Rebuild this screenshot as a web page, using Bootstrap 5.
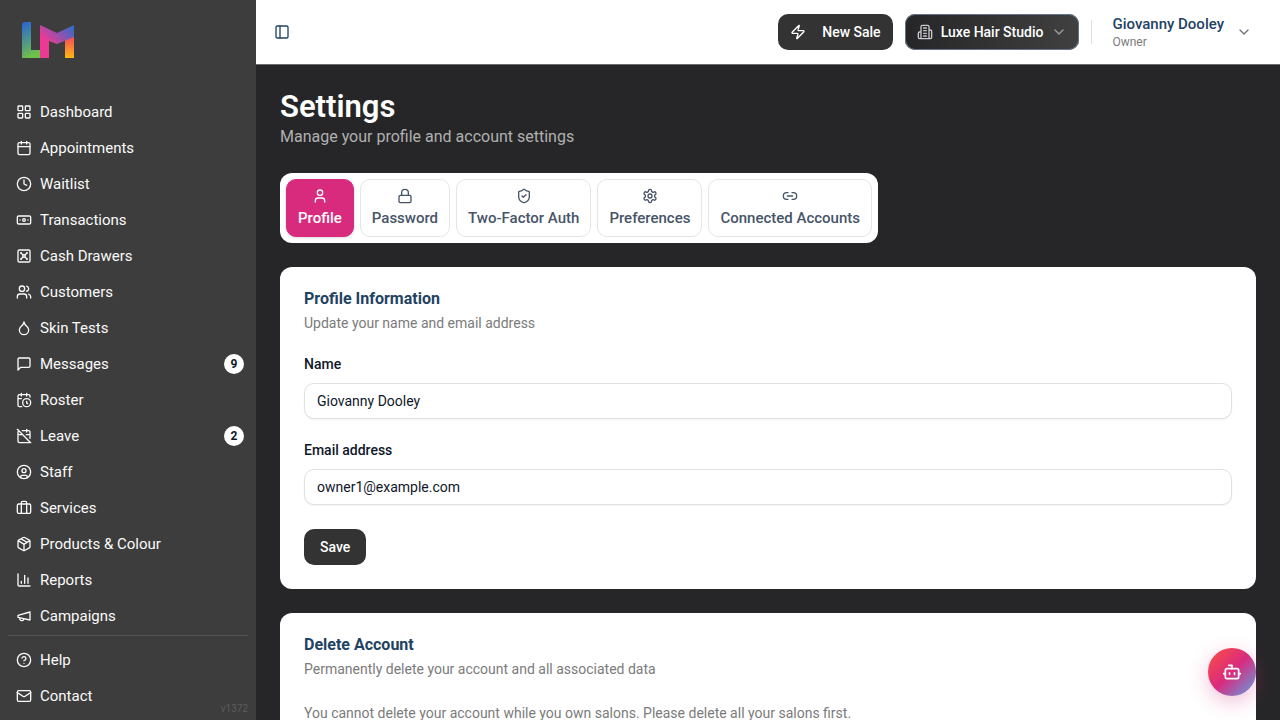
<!DOCTYPE html>
<html lang="en">
<head>
<meta charset="utf-8">
<meta name="viewport" content="width=device-width, initial-scale=1">
<title>Settings</title>
<link href="https://cdn.jsdelivr.net/npm/bootstrap@5.3.0/dist/css/bootstrap.min.css" rel="stylesheet">
<style>
  :root { --navy: #1f4363; --ink: #0f172a; --slate: #475569; --muted: #7b7b7b; --pink: #d92b7e; --coal: #333333; }
  body { font-family: Roboto, "Liberation Sans", sans-serif; font-size: 14px; line-height: 20px; color: var(--ink); background: #262628; }
  .ico { width: 16px; height: 16px; flex: none; fill: none; stroke: currentColor; stroke-width: 2; stroke-linecap: round; stroke-linejoin: round; }
  .ico-lg { width: 20px; height: 20px; }

  .sidebar { width: 256px; background: #3d3d3d; color: #fafafa; }
  .brand-link { padding: 20px 20px 34px; }
  .brand-link svg { display: block; width: 56px; height: 40px; }
  .side-link { display: flex; align-items: center; gap: 8px; height: 36px; padding: 0 8px; border-radius: 8px; color: #fafafa; text-decoration: none; font-size: 15px; }
  .side-link:hover { background: #4b4b4b; }
  .count-pill { width: 20px; height: 20px; margin-right: -4px; border-radius: 50%; background: #fff; color: var(--ink); font-size: 12px; font-weight: 700; }
  .side-foot { margin: 0 8px; padding: 6px 0; border-top: 1px solid #525252; }
  .version { right: 8px; bottom: 4px; font-size: 10px; line-height: 14px; color: #5c5c5c; }

  .topbar { height: 65px; padding: 0 24px 0 12px; background: #fff; border-bottom: 1px solid #6b6b6b; }
  .toggle-btn { padding: 6px; border: 0; color: var(--navy); line-height: 1; }
  .bar-actions { gap: 12px; }
  .dark-btn { height: 36px; padding: 0 12px; border: 0; border-radius: 10px; background: var(--coal); color: #fff; font-size: 14px; font-weight: 500; line-height: 20px; }
  .dark-btn:hover { background: #444; color: #fff; }
  .studio-btn { background: linear-gradient(90deg, #262628, #404040); box-shadow: inset 0 0 0 1px #64748b; }
  .divider { width: 1px; height: 24px; background: #e0e0e0; }
  .user-btn { gap: 12px; }
  .user-name { color: var(--navy); font-size: 15px; font-weight: 500; line-height: 20px; }
  .user-role { color: var(--muted); font-size: 12px; line-height: 16px; }

  .page-body { padding: 24px; }
  .page-title { font-size: 31px; line-height: 36px; font-weight: 600; color: #fff; }
  .page-sub { font-size: 16px; line-height: 24px; color: #b0b0b0; }
  .tab-strip { width: 598px; max-width: 100%; padding: 6px; gap: 6px; border-radius: 12px; background: #fff; overflow-x: auto; }
  .tab-btn { height: 58px; padding: 0 10px; border: 1px solid #e5e5e5; border-radius: 10px; background: #fff; color: var(--slate); font-size: 15px; font-weight: 500; line-height: 20px; gap: 4px; white-space: nowrap; }
  .tab-btn.active { border-color: var(--pink); background: var(--pink); color: #fff; box-shadow: 0 1px 3px rgba(0,0,0,.15); }

  .panel { padding: 24px; border-radius: 12px; background: #fff; }
  .panel-title { font-size: 16px; line-height: 16px; font-weight: 700; color: var(--navy); margin-bottom: 6px; }
  .panel-text { color: var(--muted); }
  .field-label { display: block; font-size: 14px; line-height: 14px; font-weight: 500; margin-bottom: 12px; }
  .field-input { height: 36px; padding: 0 12px; border: 1px solid #dfe1e3; border-radius: 10px; font-size: 14px; line-height: 20px; color: var(--ink); box-shadow: 0 1px 2px rgba(0,0,0,.05); }
  .chat-btn { right: 24px; bottom: 24px; width: 48px; height: 48px; border: 0; border-radius: 50%; color: #fff; background: linear-gradient(135deg, #ff5040 0%, #d92b7e 50%, #5ba4e6 100%); box-shadow: 0 6px 20px rgba(217,43,126,.3); }
</style>
</head>
<body>
<svg class="d-none" aria-hidden="true">
  <symbol id="i-grid" viewBox="0 0 24 24"><rect x="3" y="3" width="7" height="7" rx="1"/><rect x="14" y="3" width="7" height="7" rx="1"/><rect x="14" y="14" width="7" height="7" rx="1"/><rect x="3" y="14" width="7" height="7" rx="1"/></symbol>
  <symbol id="i-cal" viewBox="0 0 24 24"><path d="M8 2v4M16 2v4M3 10h18"/><rect x="3" y="4" width="18" height="18" rx="2"/></symbol>
  <symbol id="i-clock" viewBox="0 0 24 24"><circle cx="12" cy="12" r="10"/><path d="M12 6v6l4 2"/></symbol>
  <symbol id="i-note" viewBox="0 0 24 24"><rect x="2" y="6" width="20" height="12" rx="2"/><circle cx="12" cy="12" r="2"/><path d="M6 12h.01M18 12h.01"/></symbol>
  <symbol id="i-vault" viewBox="0 0 24 24"><rect x="3" y="3" width="18" height="18" rx="2"/><circle cx="7.5" cy="7.5" r=".5" fill="currentColor"/><path d="m7.900 7.900 2.700 2.700"/><circle cx="16.500" cy="7.500" r=".5" fill="currentColor"/><path d="m13.400 10.600 2.700-2.700"/><circle cx="7.500" cy="16.500" r=".5" fill="currentColor"/><path d="m7.900 16.100 2.700-2.700"/><circle cx="16.500" cy="16.500" r=".5" fill="currentColor"/><path d="m13.400 13.400 2.700 2.700"/><circle cx="12" cy="12" r="2"/></symbol>
  <symbol id="i-users" viewBox="0 0 24 24"><path d="M16 21v-2a4 4 0 0 0-4-4H6a4 4 0 0 0-4 4v2"/><circle cx="9" cy="7" r="4"/><path d="M22 21v-2a4 4 0 0 0-3-3.870M16 3.130a4 4 0 0 1 0 7.750"/></symbol>
  <symbol id="i-drop" viewBox="0 0 24 24"><path d="M12 22a7 7 0 0 0 7-7c0-2-1-3.900-3-5.500s-3.500-4-4-6.500c-.5 2.500-2 4.900-4 6.500C6 11.100 5 13 5 15a7 7 0 0 0 7 7z"/></symbol>
  <symbol id="i-msg" viewBox="0 0 24 24"><path d="M21 15a2 2 0 0 1-2 2H7l-4 4V5a2 2 0 0 1 2-2h14a2 2 0 0 1 2 2z"/></symbol>
  <symbol id="i-calclock" viewBox="0 0 24 24"><path d="M21 7.500V6a2 2 0 0 0-2-2H5a2 2 0 0 0-2 2v14a2 2 0 0 0 2 2h3.500M16 2v4M8 2v4M3 10h5M17.500 17.500 16 16.300V14"/><circle cx="16" cy="16" r="6"/></symbol>
  <symbol id="i-caloff" viewBox="0 0 24 24"><path d="M4.200 4.200A2 2 0 0 0 3 6v14a2 2 0 0 0 2 2h14a2 2 0 0 0 1.820-1.180M21 15.500V6a2 2 0 0 0-2-2H9.500M16 2v4M3 10h7M21 10h-5.500M2 2l20 20"/></symbol>
  <symbol id="i-usercircle" viewBox="0 0 24 24"><circle cx="12" cy="12" r="10"/><circle cx="12" cy="10" r="3"/><path d="M7 20.662V19a2 2 0 0 1 2-2h6a2 2 0 0 1 2 2v1.662"/></symbol>
  <symbol id="i-case" viewBox="0 0 24 24"><path d="M16 20V4a2 2 0 0 0-2-2h-4a2 2 0 0 0-2 2v16"/><rect x="2" y="6" width="20" height="14" rx="2"/></symbol>
  <symbol id="i-box" viewBox="0 0 24 24"><path d="M11 21.730a2 2 0 0 0 2 0l7-4A2 2 0 0 0 21 16V8a2 2 0 0 0-1-1.730l-7-4a2 2 0 0 0-2 0l-7 4A2 2 0 0 0 3 8v8a2 2 0 0 0 1 1.730zM12 22V12M3.300 7l7.703 4.734a2 2 0 0 0 1.994 0L20.700 7M7.500 4.270l9 5.150"/></symbol>
  <symbol id="i-chart" viewBox="0 0 24 24"><path d="M3 3v16a2 2 0 0 0 2 2h16M18 17V9M13 17V5M8 17v-3"/></symbol>
  <symbol id="i-horn" viewBox="0 0 24 24"><path d="m3 11 18-5v12L3 14v-3zM11.600 16.800a3 3 0 1 1-5.800-1.600"/></symbol>
  <symbol id="i-help" viewBox="0 0 24 24"><circle cx="12" cy="12" r="10"/><path d="M9.090 9a3 3 0 0 1 5.830 1c0 2-3 3-3 3M12 17h.01"/></symbol>
  <symbol id="i-mail" viewBox="0 0 24 24"><rect x="2" y="4" width="20" height="16" rx="2"/><path d="m22 7-8.970 5.700a1.940 1.940 0 0 1-2.060 0L2 7"/></symbol>
  <symbol id="i-panel" viewBox="0 0 24 24"><rect x="3" y="3" width="18" height="18" rx="2"/><path d="M9 3v18"/></symbol>
  <symbol id="i-zap" viewBox="0 0 24 24"><path d="M4 14a1 1 0 0 1-.78-1.630l9.900-10.200a.5.5 0 0 1 .86.460l-1.920 6.020A1 1 0 0 0 13 10h7a1 1 0 0 1 .78 1.630l-9.900 10.200a.5.5 0 0 1-.86-.460l1.920-6.020A1 1 0 0 0 11 14z"/></symbol>
  <symbol id="i-building" viewBox="0 0 24 24"><path d="M6 22V4a2 2 0 0 1 2-2h8a2 2 0 0 1 2 2v18ZM6 12H4a2 2 0 0 0-2 2v6a2 2 0 0 0 2 2h2M18 9h2a2 2 0 0 1 2 2v9a2 2 0 0 1-2 2h-2M10 6h4M10 10h4M10 14h4M10 18h4"/></symbol>
  <symbol id="i-down" viewBox="0 0 24 24"><path d="m6 9 6 6 6-6"/></symbol>
  <symbol id="i-user" viewBox="0 0 24 24"><path d="M19 21v-2a4 4 0 0 0-4-4H9a4 4 0 0 0-4 4v2"/><circle cx="12" cy="7" r="4"/></symbol>
  <symbol id="i-lock" viewBox="0 0 24 24"><rect x="3" y="11" width="18" height="11" rx="2"/><path d="M7 11V7a5 5 0 0 1 10 0v4"/></symbol>
  <symbol id="i-shield" viewBox="0 0 24 24"><path d="M20 13c0 5-3.500 7.500-7.660 8.950a1 1 0 0 1-.67-.01C7.500 20.500 4 18 4 13V6a1 1 0 0 1 1-1c2 0 4.500-1.200 6.240-2.720a1.170 1.170 0 0 1 1.520 0C14.510 3.810 17 5 19 5a1 1 0 0 1 1 1zM9 12l2 2 4-4"/></symbol>
  <symbol id="i-gear" viewBox="0 0 24 24"><path d="M12.220 2h-.44a2 2 0 0 0-2 2v.18a2 2 0 0 1-1 1.730l-.43.250a2 2 0 0 1-2 0l-.15-.08a2 2 0 0 0-2.730.73l-.22.380a2 2 0 0 0 .73 2.730l.15.100a2 2 0 0 1 1 1.720v.510a2 2 0 0 1-1 1.740l-.15.090a2 2 0 0 0-.73 2.730l.22.380a2 2 0 0 0 2.730.730l.15-.08a2 2 0 0 1 2 0l.43.250a2 2 0 0 1 1 1.730V20a2 2 0 0 0 2 2h.44a2 2 0 0 0 2-2v-.18a2 2 0 0 1 1-1.730l.43-.25a2 2 0 0 1 2 0l.15.080a2 2 0 0 0 2.730-.73l.22-.39a2 2 0 0 0-.73-2.730l-.15-.08a2 2 0 0 1-1-1.740v-.5a2 2 0 0 1 1-1.740l.15-.09a2 2 0 0 0 .73-2.730l-.22-.38a2 2 0 0 0-2.730-.73l-.15.080a2 2 0 0 1-2 0l-.43-.25a2 2 0 0 1-1-1.730V4a2 2 0 0 0-2-2z"/><circle cx="12" cy="12" r="3"/></symbol>
  <symbol id="i-link" viewBox="0 0 24 24"><path d="M9 17H7A5 5 0 0 1 7 7h2M15 7h2a5 5 0 1 1 0 10h-2M8 12h8"/></symbol>
  <symbol id="i-bot" viewBox="0 0 24 24"><path d="M12 8V4H8"/><rect x="4" y="8" width="16" height="12" rx="2"/><path d="M2 14h2M20 14h2M15 13v2M9 13v2"/></symbol>
</svg>

<div class="d-flex align-items-start">
  <aside class="sidebar d-flex flex-column flex-shrink-0 position-sticky top-0 vh-100">
    <a class="brand-link" href="#" aria-label="Home">
      <svg viewBox="0 0 56 40">
        <defs>
          <linearGradient id="gl" x1="0" y1="0" x2="0.300" y2="1"><stop offset="0.100" stop-color="#2e6bcb"/><stop offset="1" stop-color="#6fbf4b"/></linearGradient>
          <linearGradient id="gm" x1="0" y1="1" x2="1" y2="0"><stop offset="0.350" stop-color="#ec3a94"/><stop offset="1" stop-color="#2470cc"/></linearGradient>
          <linearGradient id="go" x1="0" y1="0" x2="0" y2="1"><stop offset="0" stop-color="#f6455d"/><stop offset="1" stop-color="#fdb913"/></linearGradient>
        </defs>
        <path d="M2 5q0-3 3-3h6v28h9v8H2z" fill="url(#gl)"/>
        <path d="M45 20l9-4v22h-9z" fill="url(#go)"/>
        <path d="M20 5l17 8 17-8v12l-17 7-8-3v17h-9z" fill="url(#gm)"/>
      </svg>
    </a>
    <nav class="px-2 flex-grow-1 overflow-hidden" aria-label="Main">
      <a class="side-link" href="#"><svg class="ico"><use href="#i-grid"/></svg>Dashboard</a>
      <a class="side-link" href="#"><svg class="ico"><use href="#i-cal"/></svg>Appointments</a>
      <a class="side-link" href="#"><svg class="ico"><use href="#i-clock"/></svg>Waitlist</a>
      <a class="side-link" href="#"><svg class="ico"><use href="#i-note"/></svg>Transactions</a>
      <a class="side-link" href="#"><svg class="ico"><use href="#i-vault"/></svg>Cash Drawers</a>
      <a class="side-link" href="#"><svg class="ico"><use href="#i-users"/></svg>Customers</a>
      <a class="side-link" href="#"><svg class="ico"><use href="#i-drop"/></svg>Skin Tests</a>
      <a class="side-link" href="#"><svg class="ico"><use href="#i-msg"/></svg><span class="flex-grow-1">Messages</span><span class="count-pill d-flex align-items-center justify-content-center">9</span></a>
      <a class="side-link" href="#"><svg class="ico"><use href="#i-calclock"/></svg>Roster</a>
      <a class="side-link" href="#"><svg class="ico"><use href="#i-caloff"/></svg><span class="flex-grow-1">Leave</span><span class="count-pill d-flex align-items-center justify-content-center">2</span></a>
      <a class="side-link" href="#"><svg class="ico"><use href="#i-usercircle"/></svg>Staff</a>
      <a class="side-link" href="#"><svg class="ico"><use href="#i-case"/></svg>Services</a>
      <a class="side-link" href="#"><svg class="ico"><use href="#i-box"/></svg>Products &amp; Colour</a>
      <a class="side-link" href="#"><svg class="ico"><use href="#i-chart"/></svg>Reports</a>
      <a class="side-link" href="#"><svg class="ico"><use href="#i-horn"/></svg>Campaigns</a>
    </nav>
    <nav class="side-foot" aria-label="Support">
      <a class="side-link" href="#"><svg class="ico"><use href="#i-help"/></svg>Help</a>
      <a class="side-link" href="#"><svg class="ico"><use href="#i-mail"/></svg>Contact</a>
    </nav>
    <span class="version position-absolute">v1372</span>
  </aside>

  <div class="flex-grow-1 min-vh-100">
    <header class="topbar d-flex align-items-center justify-content-between">
      <button class="btn toggle-btn" type="button" aria-label="Toggle sidebar"><svg class="ico"><use href="#i-panel"/></svg></button>
      <div class="bar-actions d-flex align-items-center">
        <button class="btn dark-btn d-flex align-items-center gap-3" type="button"><svg class="ico"><use href="#i-zap"/></svg>New Sale</button>
        <button class="btn dark-btn studio-btn d-flex align-items-center gap-2" type="button"><svg class="ico opacity-75"><use href="#i-building"/></svg>Luxe Hair Studio<svg class="ico opacity-50"><use href="#i-down"/></svg></button>
        <span class="divider"></span>
        <button class="btn user-btn border-0 d-flex align-items-center text-start py-0 ps-2 pe-1" type="button">
          <span><span class="user-name d-block">Giovanny Dooley</span><span class="user-role d-block">Owner</span></span>
          <svg class="ico text-secondary"><use href="#i-down"/></svg>
        </button>
      </div>
    </header>

    <main class="page-body">
      <h1 class="page-title mb-0">Settings</h1>
      <p class="page-sub mb-4">Manage your profile and account settings</p>

      <div class="tab-strip d-flex mb-4" role="tablist">
        <button class="tab-btn active flex-fill d-flex flex-column align-items-center justify-content-center" type="button" role="tab" aria-selected="true"><svg class="ico"><use href="#i-user"/></svg>Profile</button>
        <button class="tab-btn flex-fill d-flex flex-column align-items-center justify-content-center" type="button" role="tab" aria-selected="false"><svg class="ico"><use href="#i-lock"/></svg>Password</button>
        <button class="tab-btn flex-fill d-flex flex-column align-items-center justify-content-center" type="button" role="tab" aria-selected="false"><svg class="ico"><use href="#i-shield"/></svg>Two-Factor Auth</button>
        <button class="tab-btn flex-fill d-flex flex-column align-items-center justify-content-center" type="button" role="tab" aria-selected="false"><svg class="ico"><use href="#i-gear"/></svg>Preferences</button>
        <button class="tab-btn flex-fill d-flex flex-column align-items-center justify-content-center" type="button" role="tab" aria-selected="false"><svg class="ico"><use href="#i-link"/></svg>Connected Accounts</button>
      </div>

      <section class="panel mb-4">
        <h2 class="panel-title">Profile Information</h2>
        <p class="panel-text mb-4">Update your name and email address</p>
        <form>
          <div class="mb-4">
            <label class="field-label" for="name">Name</label>
            <input class="form-control field-input" id="name" type="text" value="Giovanny Dooley">
          </div>
          <div class="mb-4">
            <label class="field-label" for="email">Email address</label>
            <input class="form-control field-input" id="email" type="email" value="owner1@example.com">
          </div>
          <button class="btn dark-btn px-3" type="button">Save</button>
        </form>
      </section>

      <section class="panel">
        <h2 class="panel-title">Delete Account</h2>
        <p class="panel-text mb-4">Permanently delete your account and all associated data</p>
        <p class="panel-text mb-0">You cannot delete your account while you own salons. Please delete all your salons first.</p>
      </section>
    </main>
  </div>
</div>

<button class="chat-btn position-fixed d-flex align-items-center justify-content-center" type="button" aria-label="Open assistant"><svg class="ico ico-lg"><use href="#i-bot"/></svg></button>
<script src="https://cdn.jsdelivr.net/npm/bootstrap@5.3.0/dist/js/bootstrap.bundle.min.js"></script>
</body>
</html>
